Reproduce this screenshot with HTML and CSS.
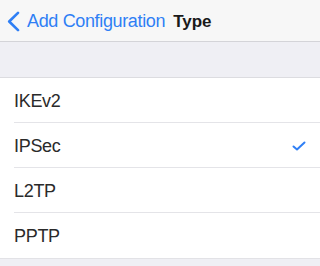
FILE: index.html
```html
<!DOCTYPE html>
<html lang="en">
<head>
  <meta charset="UTF-8" />
  <title>Type</title>
  <meta name="viewport" content="width=device-width, initial-scale=1.0" />
  <link rel="stylesheet" href="styles.css">
</head>
<body>

  <!-- Navigation bar -->
  <div class="nav-bar">
    <a class="back-btn" href="#">
      <svg class="chevron" width="13" height="21" viewBox="0 0 13 21">
        <path d="M11 1.8 L2.2 10.5 L11 19.2" fill="none" stroke="#2f7ff5" stroke-width="2.6" stroke-linecap="round" stroke-linejoin="round"/>
      </svg>
      <span>Add Configuration</span>
    </a>
    <span class="nav-title">Type</span>
  </div>

  <div class="section-gap"></div>

  <!-- Type options -->
  <ul class="option-list">
    <li class="option-row"><span>IKEv2</span></li>
    <li class="option-row selected">
      <span>IPSec</span>
      <svg class="check" width="14" height="10" viewBox="0 0 14 10">
        <path d="M1.5 5.5 L5 8.5 L12.5 1.5" fill="none" stroke="#2f7ff5" stroke-width="2" stroke-linecap="round" stroke-linejoin="round"/>
      </svg>
    </li>
    <li class="option-row"><span>L2TP</span></li>
    <li class="option-row"><span>PPTP</span></li>
  </ul>

</body>
</html>
```

FILE: styles.css
```css
body {
  margin: 0;
  font-family: 'Liberation Sans', Arial, sans-serif;
  background: #efeff4;
  color: #222;
}

.nav-bar {
  height: 42px;
  background: #f7f7f7;
  border-bottom: 1px solid #d4d4d8;
  display: flex;
  align-items: center;
  padding: 2px 0 0 7px;
  box-sizing: border-box;
}

.back-btn {
  display: flex;
  align-items: center;
  gap: 7px;
  color: #2f7ff5;
  text-decoration: none;
  font-size: 18px;
  letter-spacing: -0.35px;
  margin-right: 8px;
}

.nav-title {
  font-size: 17px;
  font-weight: 600;
  color: #1a1a1a;
}

.section-gap {
  height: 35px;
  border-bottom: 1px solid #dcdce0;
}

.option-list {
  list-style: none;
  margin: 0;
  padding: 0 0 0 14px;
  background: #fff;
  border-bottom: 1px solid #e2e2e6;
}

.option-row {
  height: 45px;
  display: flex;
  align-items: center;
  justify-content: space-between;
  padding: 2px 14px 0 0;
  font-size: 18px;
  letter-spacing: -0.3px;
  color: #2a2a2a;
  border-bottom: 1px solid #e4e4e8;
  box-sizing: border-box;
}

.option-row:last-child {
  border-bottom: none;
}

.check {
  margin-top: -1px;
}
```
